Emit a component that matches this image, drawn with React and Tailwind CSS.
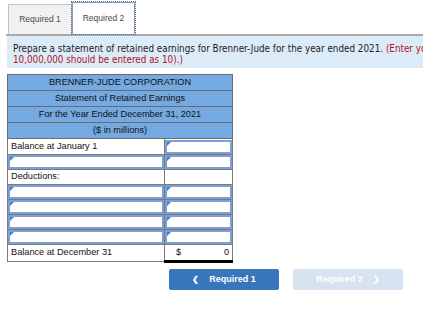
import React from 'react';

// little blue corner marker on the answer boxes
const Marker = () => (
  <svg className="absolute left-0 top-0" width="4" height="4" viewBox="0 0 4 4">
    <path d="M0 0H4L0 4Z" fill="#3b7ddb" />
  </svg>
);

const InputCell = () => (
  <td className="p-0 border border-[#7a7a7a]">
    <div className="relative h-[14px] border-2 border-[#7aa0d6] bg-white">
      <Marker />
    </div>
  </td>
);

function App() {
  const headers = ['BRENNER-JUDE CORPORATION', 'Statement of Retained Earnings', 'For the Year Ended December 31, 2021', '($ in millions)'];

  return (
    <div className="w-[423px] h-[314px] bg-white overflow-hidden" style={{ fontFamily: '"Liberation Sans", Arial, sans-serif' }}>
      {/* tabs */}
      <div className="flex pt-[4px] border-b-2 border-[#a9a9a9] ml-[6px] pl-[2px]">
        <div className="w-[64px] h-[30px] bg-[#f1f1f1] border border-[#c4c4c4] border-b-0 flex items-center justify-center text-[8.5px] text-[#4a4a4a]">
          Required 1
        </div>
        <div className="w-[63px] h-[32px] -mt-[2px] bg-white border border-[#9a9a9a] border-b-0 outline-1 outline-dotted outline-[#3c6fb5] flex items-center justify-center text-[8.5px] text-[#4a4a4a]">
          Required 2
        </div>
      </div>

      {/* instructions */}
      <div className="ml-[7px] bg-[#dcebf8] h-[32px] pl-[6px] pt-[7px] text-[9.8px] leading-[11px] text-[#222] whitespace-nowrap overflow-hidden" style={{ fontFamily: '"DejaVu Sans Condensed", "DejaVu Sans", Verdana, sans-serif' }}>
        <div>Prepare a statement of retained earnings for Brenner-Jude for the year ended 2021. <span className="text-[#b0141c]">(Enter yo</span></div>
        <div className="text-[#b0141c]">10,000,000 should be entered as 10).)</div>
      </div>

      {/* table */}
      <table className="ml-[7px] mt-[6px] w-[225px] border-collapse text-[9.2px] text-[#111] table-fixed">
        <colgroup>
          <col className="w-[157px]" />
          <col className="w-[68px]" />
        </colgroup>
        <tbody>
          {headers.map(h => (
            <tr key={h} className="h-[16px]">
              <td colSpan={2} className="bg-[#74a9e1] border border-[#6b6b6b] text-center p-0">{h}</td>
            </tr>
          ))}
          <tr className="h-[16px]">
            <td className="border border-[#7a7a7a] px-[3px] py-0">Balance at January 1</td>
            <InputCell />
          </tr>
          <tr>
            <InputCell />
            <InputCell />
          </tr>
          <tr className="h-[15px]">
            <td className="border border-[#7a7a7a] px-[3px] py-0">Deductions:</td>
            <td className="border border-[#7a7a7a] p-0" />
          </tr>
          {[0, 1, 2, 3].map(i => (
            <tr key={i}>
              <InputCell />
              <InputCell />
            </tr>
          ))}
          <tr className="h-[17px]">
            <td className="border border-[#7a7a7a] px-[3px] py-0">Balance at December 31</td>
            <td className="border border-[#7a7a7a] border-b-[3px] border-b-black px-[3px] py-0">
              <div className="flex justify-between pl-[8px]"><span>$</span><span>0</span></div>
            </td>
          </tr>
        </tbody>
      </table>

      {/* nav buttons */}
      <div className="flex gap-[14px] ml-[169px] mt-[6px]">
        <button className="w-[110px] h-[21px] bg-[#3775bc] rounded-[2px] text-white text-[9px] font-bold flex items-center justify-center gap-[10px]">
          <span className="text-[8px]">&#10094;</span>
          <span>Required 1</span>
        </button>
        <button className="w-[110px] h-[21px] bg-[#d7e3f1] rounded-[2px] text-white text-[9px] font-bold flex items-center justify-center gap-[10px]">
          <span>Required 2</span>
          <span className="text-[8px]">&#10095;</span>
        </button>
      </div>
    </div>
  );
}

export default App;
